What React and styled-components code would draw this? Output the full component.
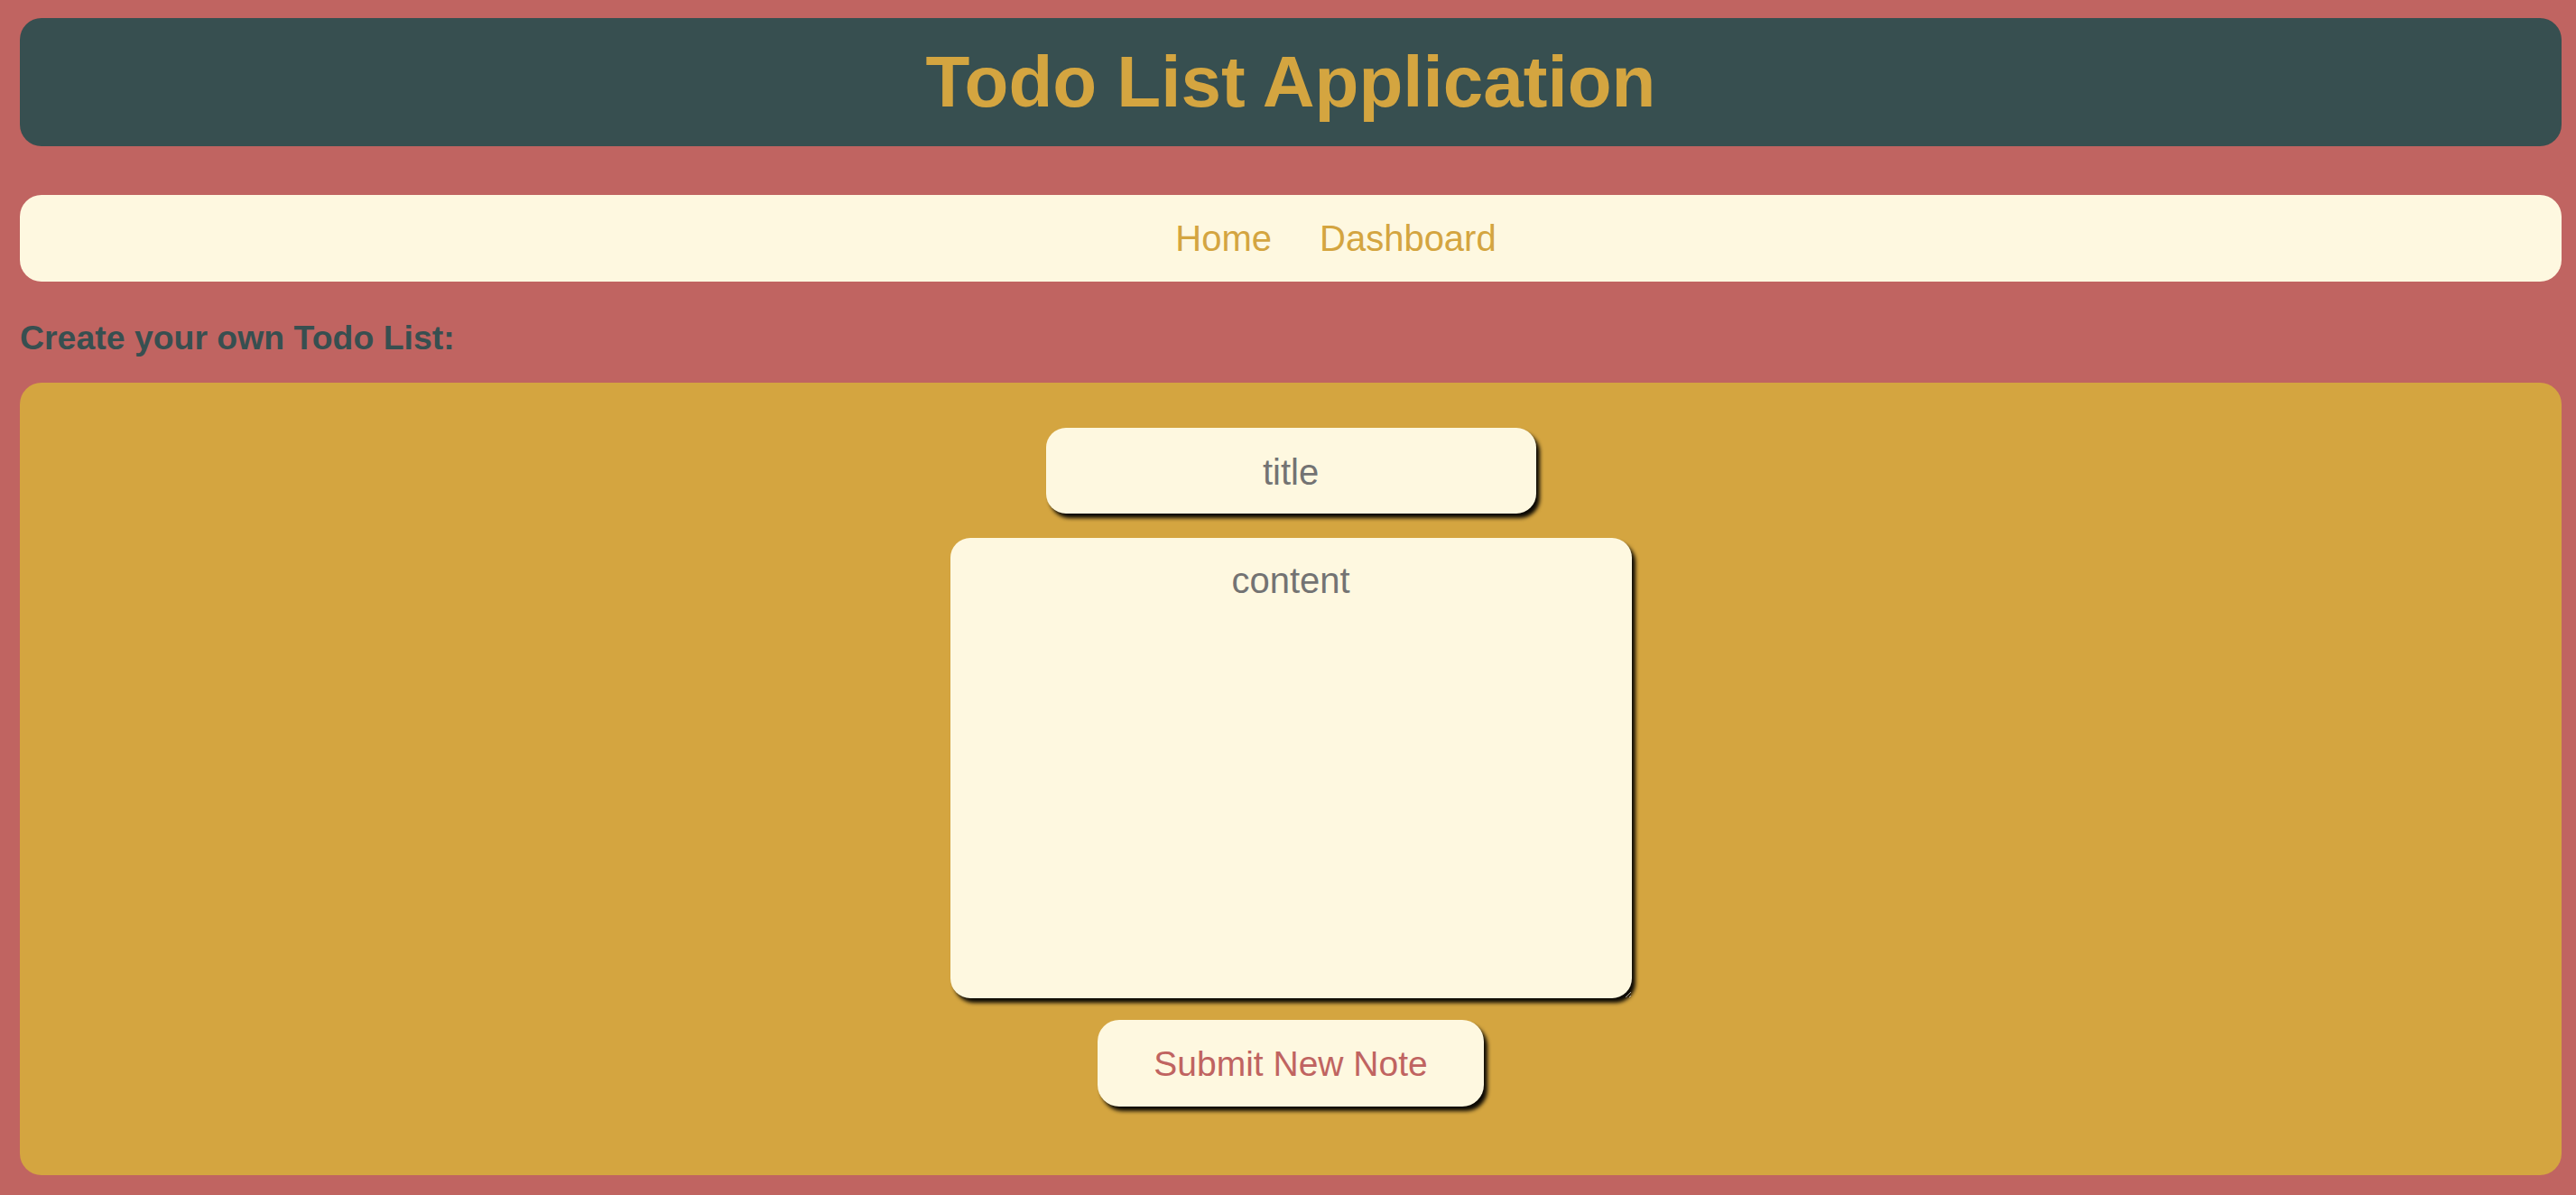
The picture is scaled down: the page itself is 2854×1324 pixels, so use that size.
import React from "react";
import styled, { createGlobalStyle } from "styled-components";

const GlobalStyle = createGlobalStyle`
  html, body {
    margin: 0;
    padding: 0;
    background-color: #c06461;
    font-family: "Liberation Sans", Arial, Helvetica, sans-serif;
  }
`;

const Page = styled.div`
  display: flex;
  flex-direction: column;
  padding: 20px 16px 22px 22px;
  background-color: #c06461;
  min-height: 100vh;
  box-sizing: border-box;
`;

const Header = styled.header`
  display: flex;
  justify-content: center;
  align-items: center;
  height: 142px;
  border-radius: 24px;
  background-color: #374f50;
  h1 {
    margin: 0;
    font-size: 80px;
    font-weight: 700;
    color: #d4a540;
    line-height: 1.15;
  }
`;

const Nav = styled.nav`
  display: flex;
  justify-content: center;
  align-items: center;
  gap: 53px;
  height: 96px;
  margin-top: 54px;
  padding-left: 100px;
  border-radius: 24px;
  background-color: #fef8e0;
`;

const NavLink = styled.a`
  font-size: 40px;
  color: #d4a540;
  text-decoration: none;
  cursor: pointer;
`;

const Heading = styled.h3`
  margin: 41px 0 28px;
  font-size: 37.44px;
  font-weight: 700;
  line-height: 43px;
  color: #374f50;
`;

const Card = styled.div`
  border-radius: 24px;
  background-color: #d4a540;
  padding: 50px 0 76px;
`;

const Form = styled.form`
  display: flex;
  flex-direction: column;
  align-items: center;
`;

const field = `
  box-sizing: border-box;
  border: none;
  outline: none;
  border-radius: 22px;
  background-color: #fef8e0;
  font-family: "Liberation Sans", Arial, Helvetica, sans-serif;
  font-size: 40px;
  text-align: center;
  color: #333;
  box-shadow: 4px 5px 4px rgba(0, 0, 0, 0.95);
  &::placeholder {
    color: #737373;
  }
`;

const TitleInput = styled.input`
  ${field}
  width: 543px;
  height: 95px;
  padding: 4px 20px 0;
`;

const ContentArea = styled.textarea`
  ${field}
  width: 755px;
  height: 510px;
  margin-top: 27px;
  padding: 24px 20px;
  line-height: 1.15;
  resize: both;
`;

const SubmitButton = styled.button`
  margin-top: 24px;
  height: 96px;
  width: 428px;
  padding: 2px 0 0;
  border: none;
  border-radius: 24px;
  background-color: #fef8e0;
  color: #c06461;
  font-family: "Liberation Sans", Arial, Helvetica, sans-serif;
  font-size: 39px;
  box-shadow: 4px 5px 4px rgba(0, 0, 0, 0.95);
  cursor: pointer;
`;

const App = () => {
  return (
    <>
      <GlobalStyle />
      <Page>
        <Header>
          <h1>Todo List Application</h1>
        </Header>
        <Nav>
          <NavLink>Home</NavLink>
          <NavLink>Dashboard</NavLink>
        </Nav>
        <Heading>Create your own Todo List:</Heading>
        <Card>
          <Form onSubmit={(e) => e.preventDefault()}>
            <TitleInput type="text" name="title" placeholder="title" />
            <ContentArea name="content" placeholder="content" />
            <SubmitButton type="submit">Submit New Note</SubmitButton>
          </Form>
        </Card>
      </Page>
    </>
  );
};

export default App;
